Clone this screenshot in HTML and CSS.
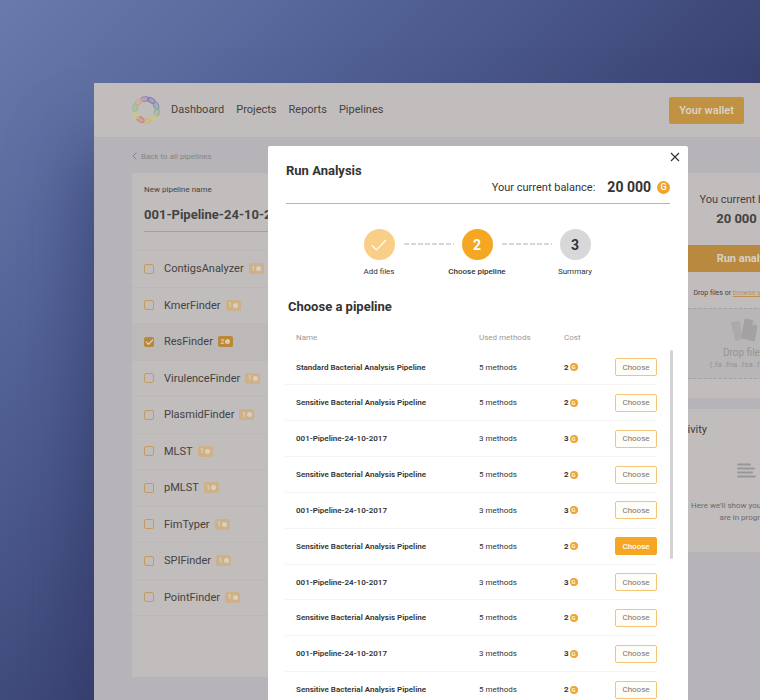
FILE: index.html
```html
<!DOCTYPE html>
<html lang="en">
<head>
<meta charset="utf-8">
<title>Run Analysis</title>
<link rel="stylesheet" href="styles.css">
</head>
<body>
<div class="app">
  <header class="topbar">
    <a class="logo" href="#" aria-label="Home">
      <svg viewBox="0 0 28 28" width="28" height="28" fill-opacity=".35" stroke-width="1">
        <g transform="translate(14 14)">
          <ellipse cy="-11" rx="3.9" ry="2.4" transform="rotate(-6)" fill="#8f78ae" stroke="#9a86b4"/>
          <ellipse cy="-11" rx="3.9" ry="2.4" transform="rotate(30)" fill="#7a6caa" stroke="#8577ae"/>
          <ellipse cy="-11" rx="3.9" ry="2.4" transform="rotate(66)" fill="#7c8fb8" stroke="#8391b5"/>
          <ellipse cy="-11" rx="3.9" ry="2.4" transform="rotate(102)" fill="#8fb58b" stroke="#8fb092"/>
          <ellipse cy="-11" rx="3.9" ry="2.4" transform="rotate(138)" fill="#cfc873" stroke="#cac57f"/>
          <ellipse cy="-11" rx="3.9" ry="2.4" transform="rotate(174)" fill="#d7b96e" stroke="#d3b477"/>
          <ellipse cy="-11" rx="3.9" ry="2.4" transform="rotate(210)" fill="#d07a74" stroke="#cd7b76"/>
          <ellipse cy="-11" rx="3.9" ry="2.4" transform="rotate(246)" fill="#d3cb7c" stroke="#cfc880"/>
          <ellipse cy="-11" rx="3.9" ry="2.4" transform="rotate(282)" fill="#93bd93" stroke="#96b996"/>
          <ellipse cy="-11" rx="3.9" ry="2.4" transform="rotate(318)" fill="#d6a684" stroke="#d1a588"/>
        </g>
      </svg>
    </a>
    <nav class="nav">
      <a href="#">Dashboard</a>
      <a href="#">Projects</a>
      <a href="#">Reports</a>
      <a href="#">Pipelines</a>
    </nav>
    <button class="wallet" type="button">Your wallet</button>
  </header>

  <main class="main">
    <a class="back" href="#">
      <svg viewBox="0 0 5 8" width="5" height="8" fill="none" stroke="currentColor"><path d="M4.3 .7 1 4l3.300 3.300"/></svg>
      Back to all pipelines
    </a>
    <div class="columns">
      <section class="card builder">
        <div class="name-field">
          <label for="pipeline-name">New pipeline name</label>
          <input id="pipeline-name" type="text" value="001-Pipeline-24-10-2017">
        </div>
        <ul class="tools">
          <li><label><input type="checkbox">ContigsAnalyzer<span class="badge">1<i></i></span></label></li>
          <li><label><input type="checkbox">KmerFinder<span class="badge">1<i></i></span></label></li>
          <li class="on"><label><input type="checkbox" checked>ResFinder<span class="badge">2<i></i></span></label></li>
          <li><label><input type="checkbox">VirulenceFinder<span class="badge">1<i></i></span></label></li>
          <li><label><input type="checkbox">PlasmidFinder<span class="badge">1<i></i></span></label></li>
          <li><label><input type="checkbox">MLST<span class="badge">1<i></i></span></label></li>
          <li><label><input type="checkbox">pMLST<span class="badge">1<i></i></span></label></li>
          <li><label><input type="checkbox">FimTyper<span class="badge">1<i></i></span></label></li>
          <li><label><input type="checkbox">SPIFinder<span class="badge">1<i></i></span></label></li>
          <li><label><input type="checkbox">PointFinder<span class="badge">1<i></i></span></label></li>
        </ul>
      </section>

      <aside class="side">
        <section class="card upload">
          <p class="side-label">You current balance</p>
          <p class="side-amount">20 000 <span class="coin coin-dim">G</span></p>
          <button class="run" type="button">Run analysis</button>
          <p class="browse">Drop files or <a href="#">browse your computer</a></p>
          <div class="dropzone">
            <svg viewBox="0 0 30 24" width="30" height="24">
              <path d="M2 5.500Q2 4.500 3 4.300L11 2.500 13 21 8 22.800Q6.500 23 6 21.500z" fill="#acaaab"/>
              <path d="M15.500 1.500Q16 .5 17.500 .8L24 2l4.500 5.500L26 22Q25.500 23.500 24 23.200L13 20.500Q12 20 12.200 18.500z" fill="#a3a1a2"/>
              <path d="m24 2-1 5 5.500 .5z" fill="#b4b1b3"/>
            </svg>
            <p class="drop-title">Drop files</p>
            <p class="drop-types">(.fa .fna .fsa .fastq)</p>
          </div>
        </section>
        <section class="card activity">
          <h2>Activity</h2>
          <svg viewBox="0 0 19 16" width="19" height="16" stroke="#9a9798" stroke-width="2" stroke-linecap="round"><path d="M1 1.500h12M1 5.500h16M1 9.500h14M1 13.500h17"/></svg>
          <p>Here we'll show you files which<br>are in progress</p>
        </section>
      </aside>
    </div>
  </main>

  <div class="modal" role="dialog" aria-labelledby="modal-title">
    <button class="close" type="button" aria-label="Close">
      <svg viewBox="0 0 10 10" width="10" height="10" fill="none" stroke="#333" stroke-width="1.200"><path d="m1 1 8 8M9 1 1 9"/></svg>
    </button>
    <div class="modal-head">
      <h1 id="modal-title">Run Analysis</h1>
      <p class="balance">Your current balance:<strong>20 000</strong><span class="coin coin-large">G</span></p>
    </div>
    <ol class="steps">
      <li class="step done">
        <span class="dot"><svg viewBox="0 0 16 12" width="16" height="12" fill="none" stroke="#fff" stroke-width="1.200"><path d="m1 6.500 4.500 4.500L15 1"/></svg></span>
        <span class="step-label">Add files</span>
      </li>
      <li class="link" aria-hidden="true"><svg viewBox="0 0 50 2" width="50" height="2" stroke="#ccc" stroke-width="1.500" stroke-dasharray="5 2"><path d="M0 1h50"/></svg></li>
      <li class="step current"><span class="dot">2</span><span class="step-label">Choose pipeline</span></li>
      <li class="link" aria-hidden="true"><svg viewBox="0 0 50 2" width="50" height="2" stroke="#ccc" stroke-width="1.500" stroke-dasharray="5 2"><path d="M0 1h50"/></svg></li>
      <li class="step"><span class="dot">3</span><span class="step-label">Summary</span></li>
    </ol>
    <h2 class="modal-title">Choose a pipeline</h2>
    <div class="table-area">
      <table class="pipelines">
        <thead><tr><th class="c-name">Name</th><th class="c-methods">Used methods</th><th class="c-cost">Cost</th><th class="c-action"></th></tr></thead>
        <tbody>
          <tr><td>Standard Bacterial Analysis Pipeline</td><td>5 methods</td><td><span class="cost">2<span class="coin">G</span></span></td><td><button type="button" class="choose">Choose</button></td></tr>
          <tr><td>Sensitive Bacterial Analysis Pipeline</td><td>5 methods</td><td><span class="cost">2<span class="coin">G</span></span></td><td><button type="button" class="choose">Choose</button></td></tr>
          <tr><td>001-Pipeline-24-10-2017</td><td>3 methods</td><td><span class="cost">3<span class="coin">G</span></span></td><td><button type="button" class="choose">Choose</button></td></tr>
          <tr><td>Sensitive Bacterial Analysis Pipeline</td><td>5 methods</td><td><span class="cost">2<span class="coin">G</span></span></td><td><button type="button" class="choose">Choose</button></td></tr>
          <tr><td>001-Pipeline-24-10-2017</td><td>3 methods</td><td><span class="cost">3<span class="coin">G</span></span></td><td><button type="button" class="choose">Choose</button></td></tr>
          <tr><td>Sensitive Bacterial Analysis Pipeline</td><td>5 methods</td><td><span class="cost">2<span class="coin">G</span></span></td><td><button type="button" class="choose active">Choose</button></td></tr>
          <tr><td>001-Pipeline-24-10-2017</td><td>3 methods</td><td><span class="cost">3<span class="coin">G</span></span></td><td><button type="button" class="choose">Choose</button></td></tr>
          <tr><td>Sensitive Bacterial Analysis Pipeline</td><td>5 methods</td><td><span class="cost">2<span class="coin">G</span></span></td><td><button type="button" class="choose">Choose</button></td></tr>
          <tr><td>001-Pipeline-24-10-2017</td><td>3 methods</td><td><span class="cost">3<span class="coin">G</span></span></td><td><button type="button" class="choose">Choose</button></td></tr>
          <tr><td>Sensitive Bacterial Analysis Pipeline</td><td>5 methods</td><td><span class="cost">2<span class="coin">G</span></span></td><td><button type="button" class="choose">Choose</button></td></tr>
        </tbody>
      </table>
      <div class="scroll-thumb"></div>
    </div>
  </div>
</div>
</body>
</html>
```

FILE: styles.css
```css
* { box-sizing: border-box; }
html { height: 100%; }
body {
  margin: 0;
  height: 100%;
  overflow: hidden;
  font-family: Roboto, "Liberation Sans", sans-serif;
  font-size: 8px;
  color: #454243;
  background: linear-gradient(135deg, #687bab 0%, #56669a 22%, #434f80 45%, #374070 60%, #343c6b 100%);
}
h1, h2, p, ul, ol { margin: 0; padding: 0; }
ul, ol { list-style: none; }
a { color: inherit; text-decoration: none; }
button, input { font: inherit; color: inherit; }
button { padding: 0; border: 0; border-radius: 2px; cursor: pointer; }
svg { display: block; flex: none; }

.app {
  position: relative;
  margin: 83px -121px 0 94px;
  min-height: 620px;
  background: #b6b4b8;
  box-shadow: -6px 70px 70px rgba(42, 50, 98, .6);
}
.topbar {
  display: flex;
  align-items: center;
  height: 54px;
  padding: 0 38px;
  background: #c1bdbc;
}
.nav { display: flex; gap: 12px; margin-left: 11px; padding-bottom: 2px; font-size: 11px; }
.wallet {
  width: 75px;
  height: 27px;
  margin: 0 99px 0 auto;
  background: #c29243;
  color: #dcd6ce;
  font-size: 11px;
  font-weight: 500;
}

.main { padding: 13px 38px 23px; }
.back { display: flex; align-items: center; gap: 4px; height: 12px; color: #878486; }
.columns { display: flex; align-items: flex-start; gap: 12px; margin-top: 11px; }
.card { background: #c1bdbc; }
.builder { flex: 1; min-height: 504px; }
.name-field { padding: 11px 12px 0; }
.name-field label { display: block; line-height: 12px; }
.name-field input {
  width: 100%;
  height: 26px;
  margin-top: 10px;
  padding: 0 0 8px;
  border: 0;
  border-bottom: 1px solid #a3a0a1;
  background: none;
  font-size: 13px;
  font-weight: 700;
  outline: 0;
}
.tools { display: flex; flex-direction: column; height: 366px; margin-top: 18px; }
.tools li {
  flex: 1;
  display: flex;
  align-items: center;
  padding: 0 12px;
  border-bottom: 1px solid #bbb8ba;
  font-size: 11px;
}
.tools li:first-child { border-top: 1px solid #bbb8ba; }
.tools .on { background: #bdb9b8; }
.tools label { display: flex; align-items: center; }
.tools input {
  appearance: none;
  display: grid;
  place-items: center;
  width: 10px;
  height: 10px;
  margin: 0 10px 0 0;
  border: 1px solid #c39b60;
  border-radius: 2px;
}
.tools input:checked { background: #ba8838; border-color: #ba8838; }
.tools input:checked::after {
  content: "";
  width: 6px;
  height: 3px;
  margin-bottom: 2px;
  border: solid #e4ddd4;
  border-width: 0 0 1px 1px;
  transform: rotate(-45deg);
}
.badge {
  display: flex;
  align-items: center;
  justify-content: center;
  gap: 1px;
  width: 15px;
  height: 11px;
  margin-left: 5px;
  border-radius: 2px;
  background: #ccb189;
  color: #dccfbe;
  font-size: 7px;
  font-weight: 700;
}
.badge i { width: 5px; height: 5px; border-radius: 50%; background: currentColor; }
.on .badge { background: #ba8838; color: #dccbb0; }

.side { display: flex; flex-direction: column; gap: 11px; width: 190px; text-align: center; }
.upload { padding: 20px 0 19px; }
.side-label { font-size: 11px; line-height: 14px; }
.side-amount {
  display: flex;
  align-items: center;
  justify-content: center;
  gap: 6px;
  margin-top: 4px;
  padding-right: 4px;
  font-size: 13px;
  line-height: 16px;
  font-weight: 700;
}
.run {
  display: block;
  width: 100%;
  height: 27px;
  margin-top: 18px;
  background: #b9893f;
  color: #d8d0c6;
  font-size: 11px;
  font-weight: 700;
}
.browse { margin-top: 16px; font-size: 7px; line-height: 10px; }
.browse a { color: #bd9250; text-decoration: underline; }
.dropzone {
  display: flex;
  flex-direction: column;
  align-items: center;
  margin-top: 10px;
  padding: 9px 8px 7px 0;
  border: 1px dashed #a5a2a4;
  background: #b9b6b8;
  color: #979496;
}
.drop-title { margin-top: 5px; font-size: 10px; line-height: 12px; }
.drop-types { line-height: 12px; }
.activity { display: flex; flex-direction: column; align-items: center; padding: 14px 6px 28px 18px; color: #6d6a6b; }
.activity h2 { align-self: flex-start; color: #3f3c3d; font-size: 11px; line-height: 14px; font-weight: 400; }
.activity svg { margin: 26px 16px 0 0; }
.activity p { margin: 21px 16px 0 0; line-height: 12px; white-space: nowrap; }

.modal {
  position: absolute;
  top: 63px;
  left: 174px;
  width: 420px;
  min-height: 570px;
  padding: 16px 15px 0 17px;
  border-radius: 2px;
  background: #fff;
  color: #333;
}
.close { position: absolute; top: 6px; right: 8px; display: block; background: none; }
.modal-head { margin: 0 3px 0 1px; border-bottom: 1px solid #b5b3b8; }
.modal-head h1 { font-size: 13px; line-height: 17px; font-weight: 700; }
.balance { display: flex; align-items: center; justify-content: flex-end; padding-bottom: 7px; font-size: 11px; line-height: 17px; }
.balance strong { margin: 0 6px 0 12px; font-size: 14px; font-weight: 700; }
.coin {
  display: inline-flex;
  align-items: center;
  justify-content: center;
  width: 8px;
  height: 8px;
  border-radius: 50%;
  background: #f0a32f;
  color: #fff;
  font-size: 6px;
  line-height: 8px;
  font-weight: 500;
}
.coin-large, .coin-dim { width: 13px; height: 13px; font-size: 9px; line-height: 13px; }
.coin-dim { background: #bf9046; color: #d8d0c6; }

.steps { display: flex; justify-content: center; margin-top: 25px; padding-right: 4px; }
.step { display: flex; flex-direction: column; align-items: center; width: 31px; }
.dot {
  display: flex;
  align-items: center;
  justify-content: center;
  width: 31px;
  height: 31px;
  border-radius: 50%;
  background: #d8d8d8;
  font-size: 14px;
  font-weight: 700;
}
.done .dot { background: #f9cf87; }
.current .dot { background: #f5a623; color: #fff; }
.step-label { margin-top: 6px; line-height: 12px; white-space: nowrap; }
.current .step-label { font-weight: 500; }
.link { margin: 14px 8px 0 9px; }

.modal-title { margin: 20px 0 0 3px; font-size: 13px; line-height: 17px; font-weight: 700; }
.table-area { display: flex; align-items: flex-start; gap: 13px; margin-top: 11px; }
.pipelines { flex: 1; height: 382px; border-collapse: collapse; table-layout: fixed; }
.pipelines th { height: 24px; padding: 0 0 2px; color: #999; font-weight: 400; text-align: left; }
.pipelines td { padding: 0; border-bottom: 1px solid #f4f4f4; }
.pipelines th:first-child, .pipelines td:first-child { padding-left: 11px; }
.pipelines td:first-child { font-weight: 600; }
.c-name { width: 194px; }
.c-methods { width: 85px; }
.c-cost { width: 51px; }
.c-action { width: 42px; }
.cost { display: flex; align-items: center; gap: 1px; font-weight: 700; }
.choose {
  display: block;
  width: 42px;
  height: 18px;
  border: 1px solid #f3c377;
  background: #fffdf8;
  color: #777;
}
.choose.active { background: #f5a623; border-color: #f5a623; color: #fff; font-weight: 500; }
.scroll-thumb { width: 3px; height: 209px; margin-top: 24px; border-radius: 2px; background: #d3d3d5; }
```
